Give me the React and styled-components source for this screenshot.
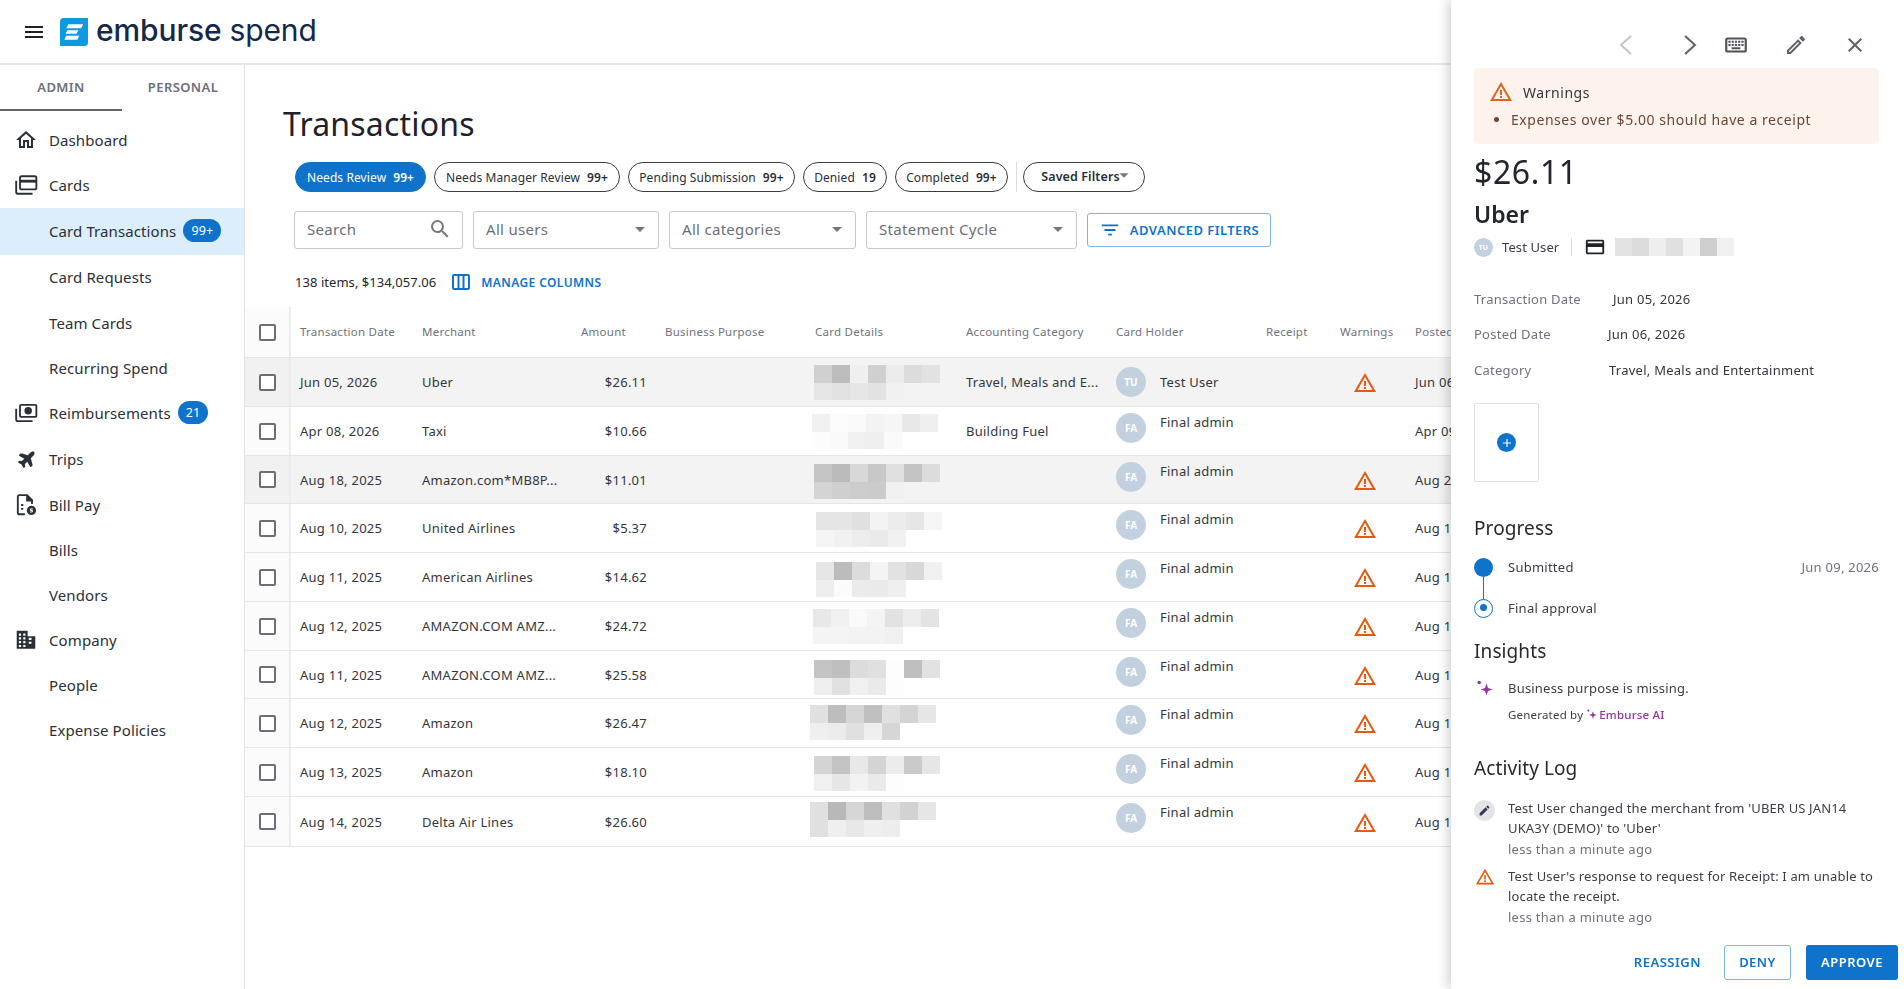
import React from 'react'
import styled, { createGlobalStyle } from 'styled-components'
import {
  MdMenu, MdOutlineHome, MdSearch, MdArrowDropDown, MdFilterList, MdWarningAmber,
  MdOutlineKeyboard, MdOutlineEdit, MdClose, MdAdd, MdOutlineCreditCard, MdEdit,
} from 'react-icons/md'
import { FaPlane } from 'react-icons/fa'

const blue = '#0f73cc'
const ink = '#2b2e36'
const grey = '#6f727c'
const line = '#e6e6e8'

const GlobalStyle = createGlobalStyle`
  html, body { margin: 0; padding: 0; height: 100%; overflow: hidden; background: #fff; }
  body { font-family: "Noto Sans", "Open Sans", sans-serif; color: ${ink}; }
  * { box-sizing: border-box; }
`

const Page = styled.div`
  display: flex;
  flex-direction: column;
  height: 989px;
  overflow: hidden;
`

const Header = styled.header`
  display: flex;
  align-items: center;
  height: 65px;
  flex-shrink: 0;
  padding-left: 22px;
  border-bottom: 2px solid #e8e8e8;
  color: #1d2129;
`

const LogoMark = styled.svg`
  width: 28px;
  height: 28px;
  margin-left: 14px;
`

const LogoText = styled.div`
  margin: -3px 0 0 8px;
  font-family: "Inter", sans-serif;
  font-size: 30px;
  line-height: 30px;
  letter-spacing: -0.1px;
  font-weight: 500;
  color: #14294a;

  span {
    font-weight: 400;
  }
`

const Body = styled.div`
  display: flex;
  flex: 1;
  min-height: 0;
`

const Sidebar = styled.nav`
  width: 245px;
  flex-shrink: 0;
  border-right: 1px solid #e2e2e2;
`

const Tabs = styled.div`
  display: flex;
  height: 45px;
  margin-bottom: 8px;
`

const Tab = styled.div`
  width: 122px;
  height: 46px;
  padding-top: 11px;
  text-align: center;
  font-size: 13px;
  line-height: 22px;
  font-weight: 600;
  letter-spacing: 0.4px;
  color: #6b6f7a;
  border-bottom: ${p => (p.$active ? '2px solid #62646c' : 'none')};
`

const NavItem = styled.div`
  display: flex;
  align-items: center;
  height: ${p => p.$h || 45}px;
  padding: 0 0 2px 16px;
  font-size: 15px;
  letter-spacing: 0.1px;
  color: #2b3038;
  background: ${p => (p.$active ? '#dcedfb' : 'transparent')};
`

const NavIcon = styled.span`
  display: flex;
  align-items: center;
  justify-content: flex-start;
  width: 33px;
  height: 24px;
  margin-left: -2px;
  margin-right: 2px;
  color: #2b3038;

  svg {
    display: block;
  }
`

const TripsIcon = styled(FaPlane)`
  margin-left: 4px;
  transform: rotate(-45deg);
`

const Badge = styled.span`
  display: inline-flex;
  align-items: center;
  justify-content: center;
  height: 23px;
  min-width: 29px;
  padding: 0 8px;
  margin-left: 7px;
  border-radius: 12px;
  background: ${blue};
  color: #fff;
  font-size: 12.5px;
`

const Main = styled.main`
  flex: 1;
  min-width: 0;
  overflow: hidden;
`

const Title = styled.h1`
  margin: 0;
  padding: 37px 0 0 38px;
  font-size: 32px;
  line-height: 44px;
  font-weight: 400;
  letter-spacing: 0.2px;
  color: #1f2229;
`

const ChipRow = styled.div`
  display: flex;
  align-items: center;
  height: 30px;
  margin: 16px 0 0 50px;
  gap: 8px;
`

const Chip = styled.div`
  display: flex;
  align-items: center;
  justify-content: center;
  gap: 7px;
  height: 30px;
  width: ${p => p.$w}px;
  border-radius: 15px;
  border: 1px solid ${p => (p.$active ? blue : '#3a3d45')};
  background: ${p => (p.$active ? blue : '#fff')};
  color: ${p => (p.$active ? '#fff' : ink)};
  font-size: 12px;
  letter-spacing: 0.1px;
  white-space: nowrap;

  b {
    font-weight: 600;
  }
`

const ChipDivider = styled.div`
  width: 1px;
  height: 30px;
  margin-right: -2px;
  background: #ddd;
`

const SavedChip = styled(Chip)`
  font-size: 12.5px;
  font-weight: 600;
  gap: 0;
  padding-bottom: 2px;

  svg {
    margin: -2px -8px 0 -7px;
    color: #777;
  }
`

const FilterRow = styled.div`
  display: flex;
  align-items: center;
  margin: 19px 0 0 49px;
  gap: 10px;
`

const Field = styled.div`
  display: flex;
  align-items: center;
  justify-content: space-between;
  width: ${p => p.$w}px;
  height: 38px;
  padding: 0 ${p => p.$pr || 6}px 2px 12px;
  border: 1px solid #c8c8c8;
  border-radius: 3px;
  font-size: 15px;
  letter-spacing: 0.3px;
  color: #6c6f78;

  svg {
    color: #777;
  }
`

const OutlineButton = styled.button`
  display: inline-flex;
  align-items: center;
  justify-content: center;
  gap: 9px;
  width: ${p => p.$w}px;
  height: ${p => p.$h || 34}px;
  border: 1px solid #7fb4e6;
  border-radius: 3px;
  background: #fff;
  color: ${blue};
  font-family: inherit;
  font-size: 13px;
  font-weight: 600;
  letter-spacing: 0.45px;
  padding: 0;
`

const CountRow = styled.div`
  display: flex;
  align-items: center;
  height: 20px;
  margin: 23px 0 0 50px;
  font-size: 13px;
  letter-spacing: 0.05px;
  color: #23262d;
`

const ColumnsLink = styled.div`
  display: flex;
  align-items: center;
  gap: 10px;
  margin-left: 15px;
  color: ${blue};
  font-size: 12px;
  font-weight: 600;
  letter-spacing: 0.4px;
`

const Table = styled.div`
  margin-top: 15px;
  width: 1660px;
  font-size: 13px;
  letter-spacing: 0.25px;
`

const Grid = styled.div`
  display: grid;
  grid-template-columns: 46px 122px 159px 84px 150px 151px 150px 150px 74px 75px 145px;
  height: ${p => p.$h}px;
  border-bottom: 1px solid ${line};
  background: ${p => (p.$shade ? '#f3f3f3' : '#fff')};
`

const HeadCell = styled.div`
  display: flex;
  align-items: center;
  padding: 0 9px 1px;
  font-size: 11.5px;
  letter-spacing: 0.25px;
  color: ${grey};
  white-space: nowrap;
`

const CheckCell = styled.div`
  display: flex;
  align-items: center;
  justify-content: center;
  border-right: 2px solid #ececec;
  background: ${p => (p.$shade ? '#f1f1f1' : '#fbfbfb')};
`

const CheckBox = styled.span`
  display: block;
  width: 17px;
  height: 17px;
  border: 2px solid #6b6e79;
  border-radius: 2px;
  background: #fff;
`

const Cell = styled.div`
  display: flex;
  align-items: center;
  min-width: 0;
  padding: 0 9px;
  color: #33363e;
  white-space: nowrap;
  overflow: hidden;
  justify-content: ${p => (p.$right ? 'flex-end' : 'flex-start')};
`

const MosaicCell = styled.div`
  padding: ${p => p.$y}px 0 0 ${p => p.$x}px;
`

const Mosaic = styled.div`
  display: grid;
  grid-template-columns: repeat(7, ${p => p.$cell || 18}px);
  grid-auto-rows: ${p => (p.$single ? '18px' : '18px 17px')};
`

const Tile = styled.span`
  display: block;
  background: #${p => p.$c}${p => p.$c}${p => p.$c};
`

const HolderCell = styled.div`
  display: flex;
  align-items: ${p => (p.$top ? 'flex-start' : 'center')};
  gap: 14px;
  padding: ${p => (p.$top ? '5px 9px 0' : '0 9px')};
  color: #33363e;
  line-height: 20px;
`

const Avatar = styled.span`
  display: flex;
  align-items: center;
  justify-content: center;
  flex-shrink: 0;
  width: ${p => p.$size || 30}px;
  height: ${p => p.$size || 30}px;
  margin-top: ${p => (p.$top ? 1 : 0)}px;
  border-radius: 50%;
  background: #c3d0df;
  color: #fff;
  font-size: ${p => (p.$size ? 7 : 10)}px;
  font-weight: 700;
  letter-spacing: 0;
`

const WarnCell = styled.div`
  display: flex;
  align-items: center;
  justify-content: center;
  color: #e8590c;
  margin-left: -8px;
  padding-top: 2px;
`

const Drawer = styled.aside`
  position: fixed;
  top: 0;
  right: 0;
  bottom: 0;
  width: 453px;
  display: flex;
  flex-direction: column;
  background: #fff;
  box-shadow: -4px 0 10px rgba(0, 0, 0, 0.16);
`

const DrawerBody = styled.div`
  flex: 1;
  min-height: 0;
  padding: 0 25px 0 23px;
  overflow: hidden;
`

const DrawerNav = styled.div`
  display: grid;
  grid-template-columns: 68px 60px 32px 88px 30px;
  align-items: center;
  justify-content: end;
  justify-items: center;
  height: 68px;
  padding: 22px 9px 0 0;
  color: #5e626c;
`

const Chevron = styled.svg`
  width: 24px;
  height: 24px;
  stroke: ${p => (p.$muted ? '#c2c3c6' : '#5e626c')};
  stroke-width: 2;
  fill: none;
`

const KeyboardIcon = styled(MdOutlineKeyboard)`
  color: #4f525a;
`

const WarningBox = styled.section`
  height: 76px;
  padding: 12px 15px;
  border-radius: 4px;
  background: #fdf3ec;
`

const WarningHead = styled.div`
  display: flex;
  align-items: center;
  gap: 10px;
  height: 24px;
  font-size: 14px;
  letter-spacing: 0.55px;
  color: #33363e;

  svg {
    color: #e0631f;
  }
`

const WarningList = styled.ul`
  margin: 4px 0 0;
  padding: 0 0 0 22px;
  font-size: 14px;
  line-height: 24px;
  letter-spacing: 0.55px;
  color: #6a4636;
`

const Amount = styled.div`
  margin-top: 8px;
  font-size: 32px;
  line-height: 40px;
  letter-spacing: 0.6px;
  color: #22252c;
`

const Merchant = styled.div`
  margin-top: 6px;
  font-size: 23px;
  line-height: 32px;
  font-weight: 600;
  color: #22252c;
`

const MetaRow = styled.div`
  display: flex;
  align-items: center;
  height: 24px;
  margin-top: 5px;
  font-size: 13px;
  letter-spacing: 0.1px;
  color: #3a3d45;
`

const MetaName = styled.span`
  margin-left: 9px;
  padding-right: 12px;
  border-right: 1px solid #ddd;
  line-height: 18px;
`

const MetaCard = styled.span`
  display: flex;
  margin: 0 9px 0 12px;
  color: #1f2229;
`

const Detail = styled.div`
  display: flex;
  height: 20px;
  margin-top: ${p => p.$mt}px;
  font-size: 13px;
  line-height: 20px;
  letter-spacing: 0.25px;
  color: #33363e;
`

const DetailLabel = styled.span`
  width: ${p => p.$w}px;
  color: ${grey};
`

const UploadBox = styled.div`
  display: flex;
  align-items: center;
  justify-content: center;
  width: 65px;
  height: 79px;
  margin-top: 23px;
  border: 1px solid #e0e0e0;
  border-radius: 2px;
`

const PlusDot = styled.span`
  display: flex;
  align-items: center;
  justify-content: center;
  width: 19px;
  height: 19px;
  border-radius: 50%;
  background: ${blue};
  color: #fff;
`

const SectionTitle = styled.h2`
  margin: ${p => p.$mt}px 0 0;
  font-size: 19px;
  line-height: 28px;
  font-weight: 400;
  letter-spacing: 0.1px;
  color: #26292f;
`

const Step = styled.div`
  display: flex;
  align-items: center;
  height: 20px;
  margin-top: ${p => p.$mt}px;
  font-size: 13px;
  letter-spacing: 0.25px;
  color: #3a3d45;
`

const StepDot = styled.span`
  position: relative;
  display: block;
  flex-shrink: 0;
  width: 19px;
  height: 19px;
  margin-right: 15px;
  border-radius: 50%;
  background: ${p => (p.$done ? blue : '#fff')};
  border: ${p => (p.$done ? 'none' : `1px solid ${blue}`)};

  &::after {
    content: '';
    position: absolute;
    display: ${p => (p.$done ? 'none' : 'block')};
    left: 5px;
    top: 4px;
    width: 7px;
    height: 7px;
    border-radius: 50%;
    background: ${blue};
  }

  &::before {
    content: '';
    position: absolute;
    display: ${p => (p.$done ? 'block' : 'none')};
    left: 9px;
    top: 19px;
    width: 1px;
    height: 23px;
    background: ${blue};
  }
`

const StepDate = styled.span`
  margin-left: auto;
  color: ${grey};
`

const InsightRow = styled.div`
  display: flex;
  align-items: center;
  height: 20px;
  margin-top: 13px;
  font-size: 13px;
  letter-spacing: 0.2px;
  color: #3a3d45;
`

const Spark = styled.svg`
  width: ${p => p.$s}px;
  height: ${p => p.$s}px;
  flex-shrink: 0;
  fill: #93349d;
`

const SparkSlot = styled.span`
  display: flex;
  justify-content: flex-end;
  width: 19px;
  margin-right: 15px;
`

const Generated = styled.div`
  display: flex;
  align-items: center;
  height: 18px;
  margin: 7px 0 0 34px;
  font-size: 11.5px;
  letter-spacing: 0.2px;
  color: #3a3d45;

  svg {
    margin: 0 2px 0 4px;
  }

  b {
    color: #93349d;
    font-weight: 500;
  }
`

const LogItem = styled.div`
  display: flex;
  margin-top: ${p => p.$mt}px;
  font-size: 13px;
  line-height: 20px;
  letter-spacing: 0.15px;
  color: #3a3d45;
`

const LogIcon = styled.span`
  display: flex;
  align-items: center;
  justify-content: center;
  flex-shrink: 0;
  width: 21px;
  height: 21px;
  margin: ${p => (p.$soft ? 2 : 0)}px 13px 0 0;
  border-radius: 50%;
  background: ${p => (p.$soft ? '#e3e4e8' : 'transparent')};
  color: ${p => (p.$soft ? '#2f3a5a' : '#e8590c')};
`

const LogTime = styled.div`
  margin-top: 1px;
  letter-spacing: 0.25px;
  color: ${grey};
`

const DrawerFooter = styled.div`
  display: flex;
  align-items: center;
  justify-content: flex-end;
  height: 59px;
  flex-shrink: 0;
  padding: 5px 6px 0 0;
`

const TextButton = styled.button`
  border: none;
  background: none;
  padding: 0;
  margin-right: 23px;
  font-family: inherit;
  font-size: 13px;
  font-weight: 600;
  letter-spacing: 0.5px;
  color: ${blue};
`

const SolidButton = styled.button`
  width: 92px;
  height: 35px;
  margin-left: 15px;
  border: none;
  border-radius: 3px;
  background: ${blue};
  color: #fff;
  font-family: inherit;
  font-size: 13px;
  font-weight: 600;
  letter-spacing: 0.5px;
`

const LogoIcon = () => (
  <LogoMark viewBox="0 0 29 29">
    <path d="M0 4a4 4 0 0 1 4-4h25v25a4 4 0 0 1-4 4H0z" fill="#0e9ade" />
    <path d="M8.500 6.500h15.500l-2.200 4H6.500zM7.500 12.800h11.500l-2 3.400H5.800zM6.500 18.500h13.500l-2.200 4H4.500z" fill="#fff" />
  </LogoMark>
)

const CardsIcon = () => (
  <svg width="24" height="24" viewBox="0 0 22 22" fill="none" stroke="currentColor" strokeWidth="1.7">
    <rect x="5.500" y="3" width="15" height="12" rx="1.500" />
    <path d="M5.500 7.500h15" strokeWidth="2.600" />
    <path d="M2 7v10.500a1.500 1.500 0 0 0 1.500 1.500H17" />
  </svg>
)

const CashIcon = () => (
  <svg width="24" height="24" viewBox="0 0 22 22" fill="none" stroke="currentColor" strokeWidth="1.7">
    <rect x="5.500" y="3.500" width="15" height="11" rx="1" />
    <circle cx="13" cy="9" r="2.600" fill="currentColor" />
    <path d="M2 7v10a1.500 1.500 0 0 0 1.500 1.500H17" />
  </svg>
)

const BillIcon = () => (
  <svg width="24" height="24" viewBox="0 0 22 22" fill="none" stroke="currentColor" strokeWidth="1.7">
    <path d="M10 19.500H5a1.500 1.500 0 0 1-1.500-1.500V3.500A1.500 1.500 0 0 1 5 2h7l4.500 4.500V10" />
    <path d="M12 2v5h5" fill="currentColor" />
    <path d="M6.500 11h2M6.500 14.500h2" />
    <circle cx="16" cy="16" r="4.200" fill="currentColor" stroke="none" />
    <path d="M17.300 14.600h-2.200v1.400h1.800v1.400h-2.200" stroke="#fff" strokeWidth="0.9" />
  </svg>
)

const CompanyIcon = () => (
  <svg width="24" height="24" viewBox="0 0 22 22" fill="currentColor">
    <path d="M2.500 2.500h10v5h7V19h-17zM4.500 5v2h2V5zm4 0v2h2V5zm-4 3.500v2h2v-2zm4 0v2h2v-2zm-4 3.500v2h2v-2zm4 0v2h2v-2zm-4 3.500v2h2v-2zm4 0v2h2v-2zm5-6.500v2h2.500v-2zm0 3.500v2h2.500v-2z" fillRule="evenodd" />
  </svg>
)

const ColumnsIcon = () => (
  <svg width="20" height="18" viewBox="0 0 20 18" fill="none" stroke={blue} strokeWidth="2">
    <rect x="2" y="2" width="16" height="14" rx="1" />
    <path d="M7.500 2v14M12.500 2v14" />
  </svg>
)

const SparkIcon = ({ size }) => (
  <Spark $s={size} viewBox="0 0 16 16">
    <circle cx="2.200" cy="2.500" r="1.700" />
    <path d="M9.500 3.500 L11 8 L15.500 9.500 L11 11 L9.500 15.500 L8 11 L3.500 9.500 L8 8 Z" />
  </Spark>
)

const TileGrid = ({ top, bottom, single, cell }) => (
  <Mosaic $single={single} $cell={cell}>
    {top.concat(bottom || []).map((c, i) => <Tile key={i} $c={c} />)}
  </Mosaic>
)

const navItems = [
  { label: 'Dashboard', icon: <MdOutlineHome size={24} /> },
  { label: 'Cards', icon: <CardsIcon /> },
  { label: 'Card Transactions', badge: '99+', active: true, h: 47 },
  { label: 'Card Requests', h: 46 },
  { label: 'Team Cards' },
  { label: 'Recurring Spend' },
  { label: 'Reimbursements', icon: <CashIcon />, badge: '21' },
  { label: 'Trips', icon: <TripsIcon size={19} />, h: 47 },
  { label: 'Bill Pay', icon: <BillIcon /> },
  { label: 'Bills' },
  { label: 'Vendors' },
  { label: 'Company', icon: <CompanyIcon /> },
  { label: 'People' },
  { label: 'Expense Policies' },
]

const chips = [
  { label: 'Needs Review', count: '99+', w: 131, active: true },
  { label: 'Needs Manager Review', count: '99+', w: 186 },
  { label: 'Pending Submission', count: '99+', w: 167 },
  { label: 'Denied', count: '19', w: 84 },
  { label: 'Completed', count: '99+', w: 113 },
]

const headers = ['Transaction Date', 'Merchant', 'Amount', 'Business Purpose', 'Card Details', 'Accounting Category', 'Card Holder', 'Receipt', 'Warnings', 'Posted Date']

const rows = [
  { h: 49, date: 'Jun 05, 2026', merchant: 'Uber', amount: '$26.11', category: 'Travel, Meals and E...', holder: 'Test User', initials: 'TU', warn: true, posted: 'Jun 06, 2026', shade: true, x: 8, y: 7,
    top: ['d0', 'bd', 'ef', 'd0', 'ec', 'dc', 'e2'], bottom: ['e6', 'e2', 'e6', 'e2', 'f0'] },
  { h: 49, date: 'Apr 08, 2026', merchant: 'Taxi', amount: '$10.66', category: 'Building Fuel', holder: 'Final admin', initials: 'FA', posted: 'Apr 09, 2026', x: 6, y: 7,
    top: ['f0', 'fc', 'fa', 'f3', 'f6', 'e8', 'ef'], bottom: ['fc', 'fa', 'f0', 'ef', 'fa'] },
  { h: 48, date: 'Aug 18, 2025', merchant: 'Amazon.com*MB8P...', amount: '$11.01', holder: 'Final admin', initials: 'FA', warn: true, posted: 'Aug 20, 2025', shade: true, x: 8, y: 8,
    top: ['c5', 'bb', 'd8', 'c8', 'e0', 'c4', 'dc'], bottom: ['d4', 'cf', 'cc', 'cb', 'f0'] },
  { h: 49, date: 'Aug 10, 2025', merchant: 'United Airlines', amount: '$5.37', holder: 'Final admin', initials: 'FA', warn: true, posted: 'Aug 12, 2025', x: 10, y: 8,
    top: ['e5', 'e5', 'e0', 'f3', 'ec', 'e6', 'f6'], bottom: ['f5', 'f1', 'ed', 'ea', 'f1'] },
  { h: 49, date: 'Aug 11, 2025', merchant: 'American Airlines', amount: '$14.62', holder: 'Final admin', initials: 'FA', warn: true, posted: 'Aug 13, 2025', x: 10, y: 9,
    top: ['e6', 'bc', 'dc', 'f4', 'e2', 'd8', 'f0'], bottom: ['ee', 'fb', 'eb', 'ea', 'ef'] },
  { h: 49, date: 'Aug 12, 2025', merchant: 'AMAZON.COM AMZ...', amount: '$24.72', holder: 'Final admin', initials: 'FA', warn: true, posted: 'Aug 14, 2025', x: 7, y: 7,
    top: ['e8', 'f0', 'fa', 'f4', 'e2', 'ed', 'e4'], bottom: ['f4', 'f4', 'f3', 'f3', 'f0'] },
  { h: 48, date: 'Aug 11, 2025', merchant: 'AMAZON.COM AMZ...', amount: '$25.58', holder: 'Final admin', initials: 'FA', warn: true, posted: 'Aug 13, 2025', x: 8, y: 9,
    top: ['c4', 'bf', 'dc', 'e0', 'fd', 'bf', 'e2'], bottom: ['ef', 'e1', 'f0', 'ea', 'fd'] },
  { h: 49, date: 'Aug 12, 2025', merchant: 'Amazon', amount: '$26.47', holder: 'Final admin', initials: 'FA', warn: true, posted: 'Aug 14, 2025', x: 4, y: 6,
    top: ['e0', 'bd', 'd5', 'c0', 'e0', 'd4', 'e6'], bottom: ['ef', 'ec', 'e0', 'ef', 'd6'] },
  { h: 49, date: 'Aug 13, 2025', merchant: 'Amazon', amount: '$18.10', holder: 'Final admin', initials: 'FA', warn: true, posted: 'Aug 15, 2025', x: 8, y: 8,
    top: ['d4', 'c3', 'e8', 'd4', 'ec', 'ca', 'e6'], bottom: ['f0', 'e6', 'f2', 'ea', 'fd'] },
  { h: 50, date: 'Aug 14, 2025', merchant: 'Delta Air Lines', amount: '$26.60', holder: 'Final admin', initials: 'FA', warn: true, posted: 'Aug 16, 2025', x: 4, y: 5,
    top: ['e0', 'b8', 'd5', 'be', 'e0', 'd2', 'e6'], bottom: ['e0', 'ef', 'e8', 'ef', 'ed'] },
]

const App = () => {
  return (
    <Page>
      <GlobalStyle />
      <Header>
        <MdMenu size={24} />
        <LogoIcon />
        <LogoText>emburse <span>spend</span></LogoText>
      </Header>
      <Body>
        <Sidebar>
          <Tabs>
            <Tab $active>ADMIN</Tab>
            <Tab>PERSONAL</Tab>
          </Tabs>
          {navItems.map(item => (
            <NavItem key={item.label} $active={item.active} $h={item.h}>
              <NavIcon>{item.icon}</NavIcon>
              {item.label}
              {item.badge && <Badge>{item.badge}</Badge>}
            </NavItem>
          ))}
        </Sidebar>
        <Main>
          <Title>Transactions</Title>
          <ChipRow>
            {chips.map(c => (
              <Chip key={c.label} $w={c.w} $active={c.active}>
                {c.label} <b>{c.count}</b>
              </Chip>
            ))}
            <ChipDivider />
            <SavedChip $w={122}>
              Saved Filters <MdArrowDropDown size={22} />
            </SavedChip>
          </ChipRow>
          <FilterRow>
            <Field $w={169} $pr={10}>Search <MdSearch size={24} /></Field>
            <Field $w={186}>All users <MdArrowDropDown size={24} /></Field>
            <Field $w={187}>All categories <MdArrowDropDown size={24} /></Field>
            <Field $w={211}>Statement Cycle <MdArrowDropDown size={24} /></Field>
            <OutlineButton $w={184}><MdFilterList size={22} /> ADVANCED FILTERS</OutlineButton>
          </FilterRow>
          <CountRow>
            138 items, $134,057.06
            <ColumnsLink><ColumnsIcon /> MANAGE COLUMNS</ColumnsLink>
          </CountRow>
          <Table>
            <Grid $h={51}>
              <CheckCell><CheckBox /></CheckCell>
              {headers.map(h => <HeadCell key={h}>{h}</HeadCell>)}
            </Grid>
            {rows.map((r, i) => (
              <Grid key={i} $h={r.h} $shade={r.shade}>
                <CheckCell $shade={r.shade}><CheckBox /></CheckCell>
                <Cell>{r.date}</Cell>
                <Cell>{r.merchant}</Cell>
                <Cell $right>{r.amount}</Cell>
                <Cell />
                <MosaicCell $x={r.x} $y={r.y}>
                  <TileGrid top={r.top} bottom={r.bottom} />
                </MosaicCell>
                <Cell>{r.category}</Cell>
                <HolderCell $top={r.initials === 'FA'}>
                  <Avatar $top={r.initials === 'FA'}>{r.initials}</Avatar>
                  {r.holder}
                </HolderCell>
                <Cell />
                <WarnCell>{r.warn && <MdWarningAmber size={24} />}</WarnCell>
                <Cell>{r.posted}</Cell>
              </Grid>
            ))}
          </Table>
        </Main>
      </Body>
      <Drawer>
        <DrawerBody>
          <DrawerNav>
            <Chevron $muted viewBox="0 0 24 24"><path d="M17 3 L7 12 L17 21" /></Chevron>
            <Chevron viewBox="0 0 24 24"><path d="M7 3 L17 12 L7 21" /></Chevron>
            <KeyboardIcon size={26} />
            <MdOutlineEdit size={24} />
            <MdClose size={24} />
          </DrawerNav>
          <WarningBox>
            <WarningHead><MdWarningAmber size={24} /> Warnings</WarningHead>
            <WarningList><li>Expenses over $5.00 should have a receipt</li></WarningList>
          </WarningBox>
          <Amount>$26.11</Amount>
          <Merchant>Uber</Merchant>
          <MetaRow>
            <Avatar $size={19}>TU</Avatar>
            <MetaName>Test User</MetaName>
            <MetaCard><MdOutlineCreditCard size={22} /></MetaCard>
            <TileGrid top={['e3', 'dc', 'ee', 'e0', 'f3', 'cf', 'f0']} single cell={17} />
          </MetaRow>
          <Detail $mt={30}><DetailLabel $w={139}>Transaction Date</DetailLabel>Jun 05, 2026</Detail>
          <Detail $mt={15}><DetailLabel $w={134}>Posted Date</DetailLabel>Jun 06, 2026</Detail>
          <Detail $mt={16}><DetailLabel $w={135}>Category</DetailLabel>Travel, Meals and Entertainment</Detail>
          <UploadBox><PlusDot><MdAdd size={14} /></PlusDot></UploadBox>
          <SectionTitle $mt={32}>Progress</SectionTitle>
          <Step $mt={15}><StepDot $done />Submitted<StepDate>Jun 09, 2026</StepDate></Step>
          <Step $mt={21}><StepDot />Final approval</Step>
          <SectionTitle $mt={19}>Insights</SectionTitle>
          <InsightRow><SparkSlot><SparkIcon size={16} /></SparkSlot>Business purpose is missing.</InsightRow>
          <Generated>Generated by <SparkIcon size={10} /> <b>Emburse AI</b></Generated>
          <SectionTitle $mt={31}>Activity Log</SectionTitle>
          <LogItem $mt={16}>
            <LogIcon $soft><MdEdit size={13} /></LogIcon>
            <div>
              Test User changed the merchant from 'UBER US JAN14 UKA3Y (DEMO)' to 'Uber'
              <LogTime>less than a minute ago</LogTime>
            </div>
          </LogItem>
          <LogItem $mt={7}>
            <LogIcon><MdWarningAmber size={20} /></LogIcon>
            <div>
              Test User's response to request for Receipt: I am unable to locate the receipt.
              <LogTime>less than a minute ago</LogTime>
            </div>
          </LogItem>
        </DrawerBody>
        <DrawerFooter>
          <TextButton>REASSIGN</TextButton>
          <OutlineButton $w={67} $h={35}>DENY</OutlineButton>
          <SolidButton>APPROVE</SolidButton>
        </DrawerFooter>
      </Drawer>
    </Page>
  )
}

export default App
